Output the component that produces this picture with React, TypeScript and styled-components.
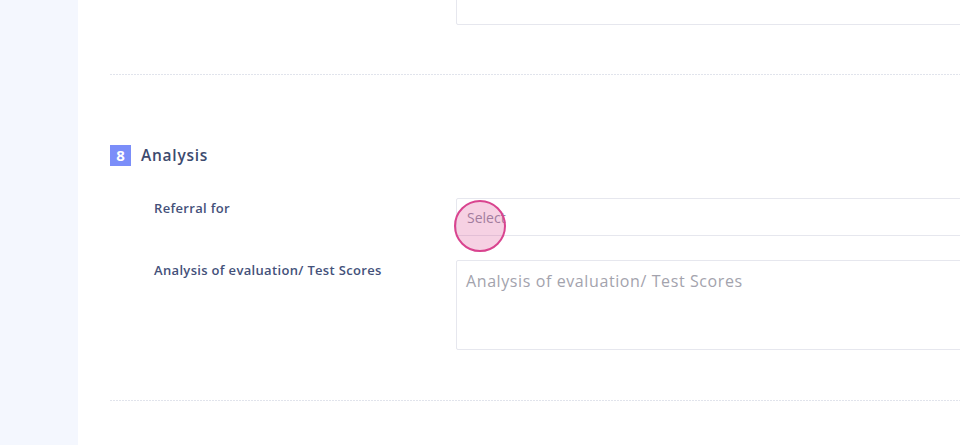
import React from 'react';
import styled, { createGlobalStyle } from 'styled-components';

const GlobalStyle = createGlobalStyle`
  html, body {
    margin:0;
    padding:0;
    background:#fff;
    overflow:hidden;
  }
  body {
    font-family:"Open Sans", "Liberation Sans", sans-serif;
  }
`;

const Page = styled.div`
  display:flex;
  flex-direction:row;
  width:960px;
  height:445px;
  overflow:hidden;
`;

const Sidebar = styled.aside`
  flex:0 0 78px;
  background:#f4f7fe;
`;

const Main = styled.main`
  flex:1;
  position:relative;
  background:#fff;
  padding-left:32px;
  overflow:hidden;
`;

const Form = styled.div`
  width:1100px;
  margin-top:-65px;
`;

const Row = styled.div<{ $gap?: number }>`
  display:grid;
  grid-template-columns:302px 1fr;
  padding-left:44px;
  margin-bottom:${p => p.$gap ?? 0}px;
`;

const Label = styled.label`
  font-size:13px;
  font-weight:600;
  letter-spacing:0.33px;
  color:#44517a;
  padding-top:1px;
  line-height:18px;
`;

const Box = styled.div<{ $h: number }>`
  box-sizing:border-box;
  height:${p => p.$h}px;
  border:1px solid #e6e7ee;
  border-radius:2px;
  background:#fff;
`;

const SelectBox = styled(Box)`
  display:flex;
  align-items:center;
  padding:0 10px;
  font-size:14px;
  color:#8e8ea3;
`;

const Textarea = styled.textarea`
  box-sizing:border-box;
  display:block;
  width:100%;
  height:90px;
  border:1px solid #e6e7ee;
  border-radius:2px;
  padding:9px 9px;
  font-family:"Open Sans", "Liberation Sans", sans-serif;
  font-size:16px;
  letter-spacing:0.6px;
  color:#333;
  resize:none;
  outline:none;
  &::placeholder {
    color:#a3a3ad;
  }
`;

const Divider = styled.div<{ $top: number; $bottom: number }>`
  height:1px;
  margin:${p => p.$top}px 0 ${p => p.$bottom}px;
  background:repeating-linear-gradient(to right, #e1e4ec 0 2px, transparent 2px 3px);
`;

const Heading = styled.h3`
  display:flex;
  align-items:center;
  gap:10px;
  margin:0 0 32px;
  font-size:15.5px;
  font-weight:600;
  letter-spacing:0.75px;
  color:#3c4a6e;
`;

const Badge = styled.span`
  display:inline-flex;
  align-items:center;
  justify-content:center;
  width:21px;
  height:21px;
  background:#7b8ef9;
  color:#fff;
  font-size:15px;
  font-weight:700;
  letter-spacing:0;
`;

const Touch = styled.div`
  position:absolute;
  left:${454 - 78}px;
  top:200px;
  width:52px;
  height:52px;
  box-sizing:border-box;
  border-radius:50%;
  border:2px solid #d9448f;
  background:rgba(220, 70, 145, 0.25);
  pointer-events:none;
`;

export default function App() {
  return (
    <>
      <GlobalStyle />
      <Page>
        <Sidebar />
        <Main>
          <Form>
            <Row>
              <span />
              <Box $h={90} />
            </Row>
            <Divider $top={49} $bottom={69} />
            <Heading>
              <Badge>8</Badge>
              Analysis
            </Heading>
            <Row $gap={24}>
              <Label>Referral for</Label>
              <SelectBox $h={38}>Select</SelectBox>
            </Row>
            <Row>
              <Label>Analysis of evaluation/ Test Scores</Label>
              <Textarea placeholder="Analysis of evaluation/ Test Scores" />
            </Row>
            <Divider $top={50} $bottom={0} />
          </Form>
          <Touch />
        </Main>
      </Page>
    </>
  );
}
